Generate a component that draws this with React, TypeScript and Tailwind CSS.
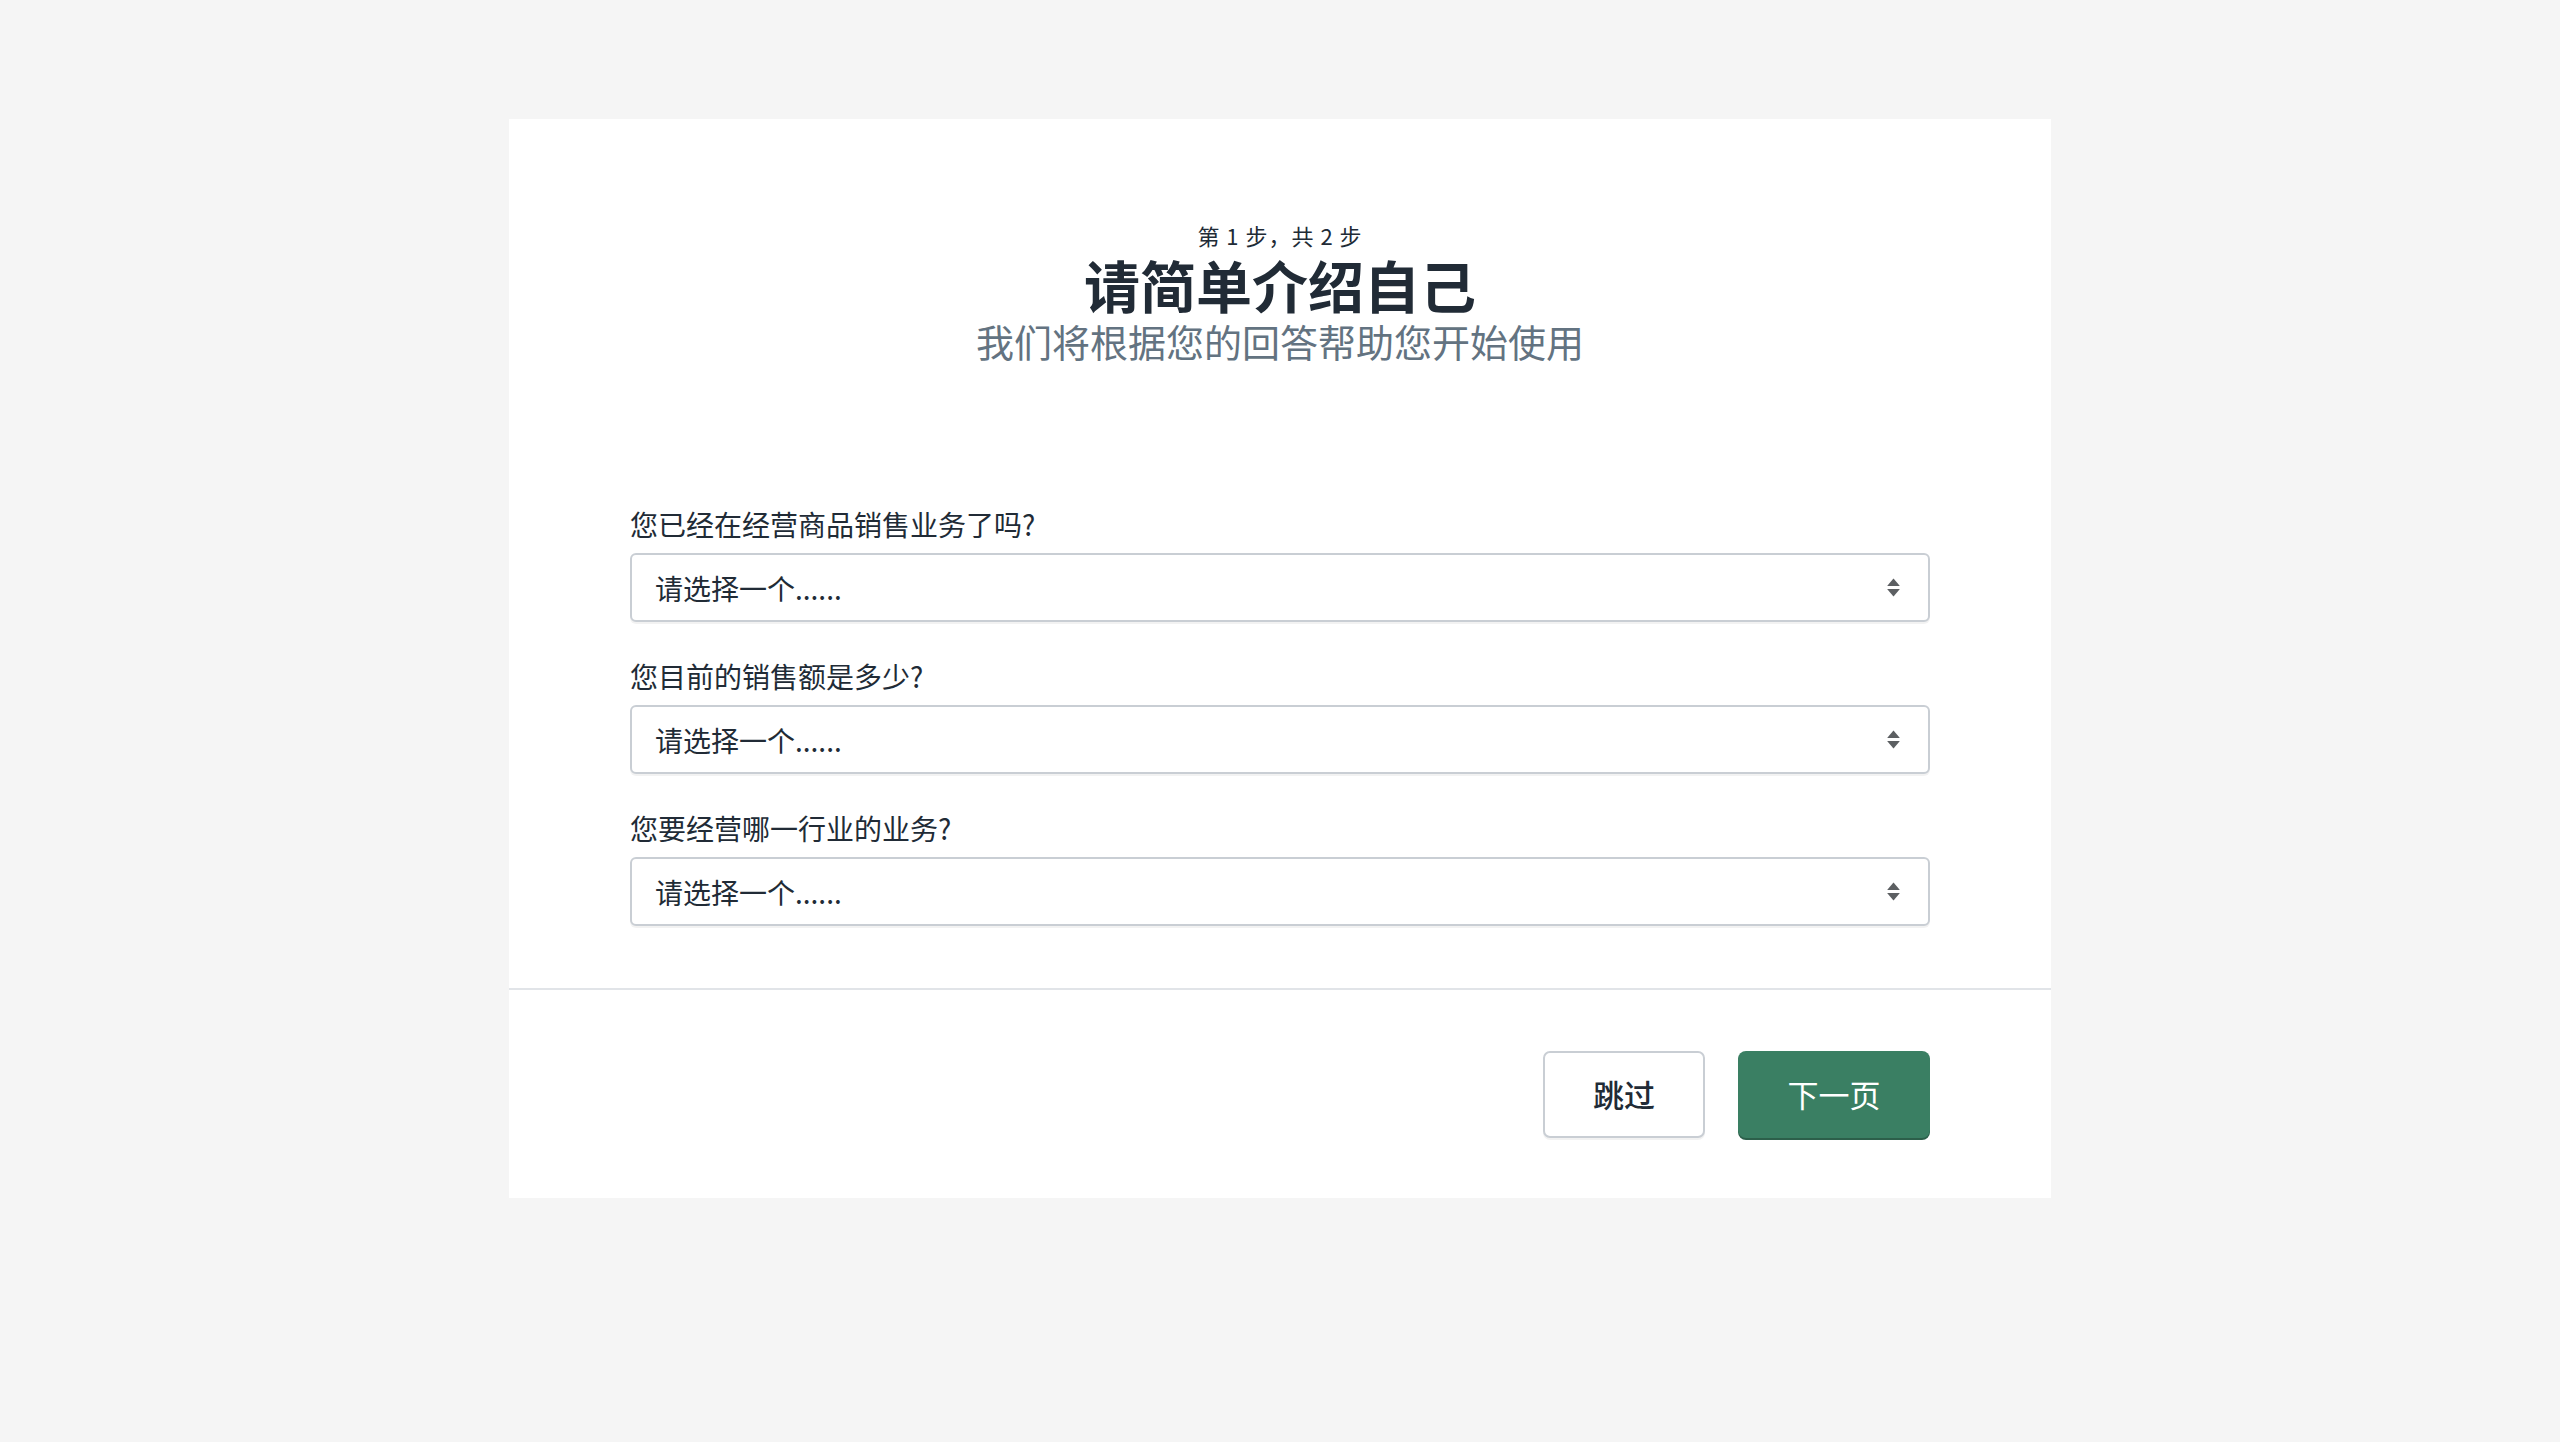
import React from "react";

const font = { fontFamily: '"Noto Sans CJK SC", "Liberation Sans", sans-serif' };

function Arrows() {
  return (
    <svg width="13" height="19" viewBox="0 0 13 19" className="shrink-0">
      <path d="M6.5 0.5 L12.5 7.5 Q12.8 8 12.2 8 L0.8 8 Q0.2 8 0.5 7.5 Z" fill="#5c5f62" />
      <path d="M0.8 11 L12.2 11 Q12.8 11 12.5 11.5 L6.5 18.5 L0.5 11.5 Q0.2 11 0.8 11 Z" fill="#5c5f62" />
    </svg>
  );
}

function Field({ label }: { label: string }) {
  return (
    <div className="flex flex-col">
      <div className="h-[36px] text-[28px] leading-[36px] text-[#212b36]">{label}</div>
      <div className="mt-[11px] flex h-[69px] items-center justify-between rounded-[6px] border-2 border-[#c9ced4] bg-white pl-[23px] pr-[28px] shadow-[0_2px_0_0_rgba(0,0,0,0.05)]">
        <span className="text-[28px] leading-[36px] text-[#212b36]">请选择一个......</span>
        <Arrows />
      </div>
    </div>
  );
}

export default function App() {
  return (
    <div className="min-h-[1442px] w-full bg-[#f5f5f5] pt-[119px]" style={font}>
      <div className="mx-auto w-[1542px] bg-white">
        <div className="px-[121px] pt-[102px] pb-[62px]">
          <div className="flex flex-col items-center text-center">
            <div className="text-[22px] leading-[28px] tracking-[1px] text-[#212b36]">第 1 步，共 2 步</div>
            <div className="mt-[5px] text-[56px] font-bold leading-[60px] text-[#212b36]">请简单介绍自己</div>
            <div className="mt-[3px] text-[38px] leading-[48px] text-[#637381]">我们将根据您的回答帮助您开始使用</div>
          </div>
          <div className="mt-[141px] flex flex-col gap-[36px]">
            <Field label="您已经在经营商品销售业务了吗?" />
            <Field label="您目前的销售额是多少?" />
            <Field label="您要经营哪一行业的业务?" />
          </div>
        </div>
        <div className="h-[2px] bg-[#e1e4e8]" />
        <div className="flex justify-end gap-[33px] px-[121px] pt-[61px] pb-[60px]">
          <button className="flex h-[87px] w-[162px] items-center justify-center rounded-[7px] border-2 border-[#c9ced4] bg-white text-[31px] font-medium text-[#212b36] shadow-[0_2px_0_0_rgba(0,0,0,0.05)]">
            跳过
          </button>
          <button className="flex h-[87px] w-[192px] items-center justify-center rounded-[8px] bg-[#3a7f63] text-[31px] text-white shadow-[0_2px_0_0_#2c5f4a]">
            下一页
          </button>
        </div>
      </div>
    </div>
  );
}
